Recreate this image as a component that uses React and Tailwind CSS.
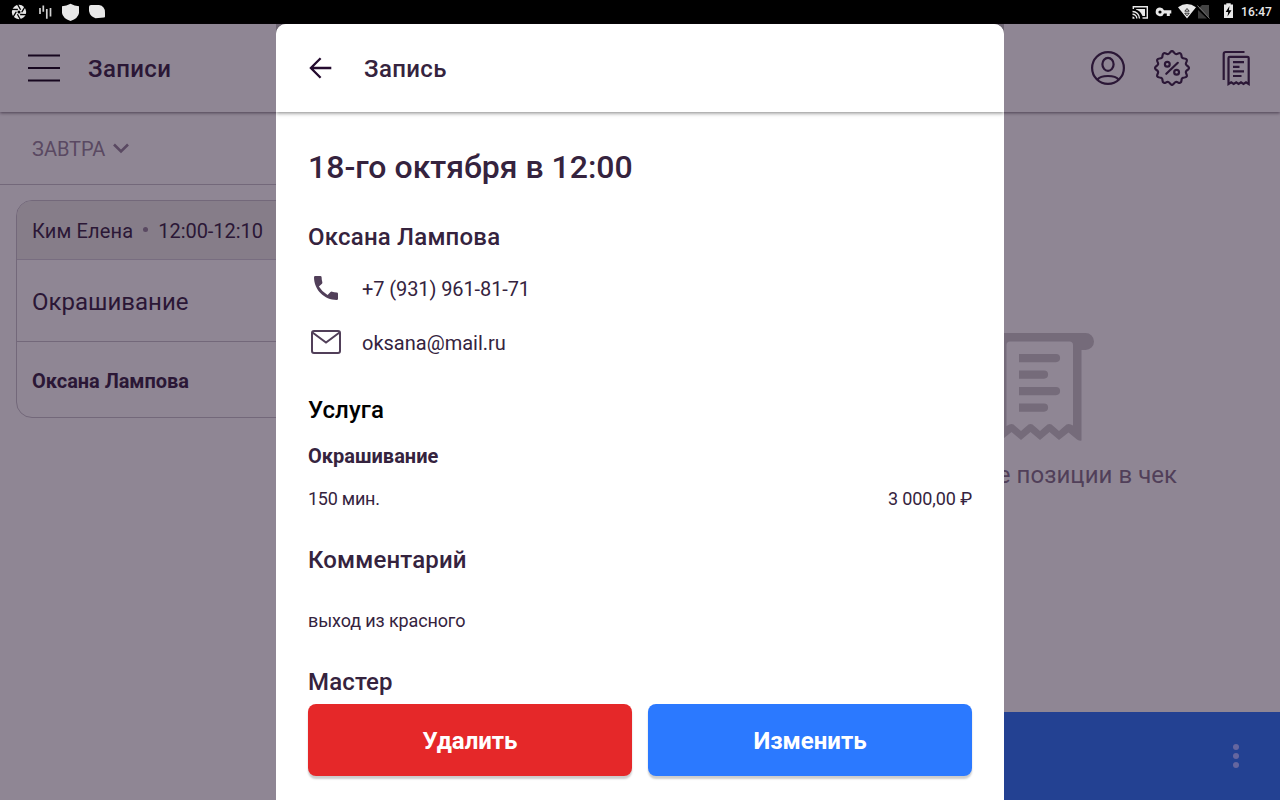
import React from "react";

const service = {
  name: "Окрашивание",
  duration: "150 мин.",
  price: "3 000,00 ₽",
};

function StatusBar() {
  return (
    <div className="h-6 shrink-0 bg-black flex items-center justify-between text-[#e8e8e8]">
      <svg width="110" height="24" viewBox="0 0 110 24" fill="currentColor">
        <circle cx="19" cy="12" r="7.2" />
        <g stroke="#000" strokeWidth="1.300" fill="none">
          {[0, 60, 120, 180, 240, 300].map((angle) => (
            <path key={angle} d="M17.500 4.300 20.600 9.800" transform={`rotate(${angle} 19 12)`} />
          ))}
        </g>
        <circle cx="19" cy="12" r="1.500" fill="#000" />
        <g stroke="#d0d0d0" strokeWidth="1.700" fill="none">
          <path d="M40 8v6M43.300 5.500v6.300M46.800 9v9.800M50.500 8v8.500" />
        </g>
        <path d="M62 6.200Q66.500 6 70.500 3.800 74.500 6 79 6.200V13Q78.300 18.300 70.500 21 62.700 18.300 62 13Z" />
        <path d="M91 5H99Q105 6 105 12.500V16.500Q105 17.500 104 17.600L95.500 18.200Q90 16.500 89 11V7Q89 5 91 5Z" />
      </svg>
      <div className="flex items-center pr-2">
        <svg width="111" height="24" viewBox="1130 0 111 24" fill="currentColor">
          <g fill="none" stroke="currentColor" strokeWidth="1.400">
            <path d="M1133.300 9V6.800H1147.300V18H1142.500" />
            <path d="M1132.500 11.500A7 7 0 0 1 1139.500 18.500M1132.500 14.300A4.300 4.300 0 0 1 1136.800 18.600" />
          </g>
          <path d="M1136 9H1145V16H1142.500Q1140.500 11 1136 9.600Z" />
          <path d="M1132.500 16.500A2.200 2.200 0 0 1 1134.700 18.700H1132.500Z" />
          <path
            fillRule="evenodd"
            d="M1160 7.600A4.300 4.300 0 1 0 1164 13.400H1166.800V16H1169.800V13.400H1171.300V10.300H1164A4.300 4.300 0 0 0 1160 7.600ZM1160 10.400A1.600 1.600 0 1 1 1160 13.600 1.600 1.600 0 0 1 1160 10.400Z"
          />
          <path d="M1178 7.300Q1187 .9 1196 7.300L1187 18.600Z" />
          <g fill="none" stroke="#222" strokeWidth=".9">
            <path d="M1184.800 11.200 1187 8.500 1189.200 11.200ZM1184.800 13.200 1187 15.900 1189.200 13.200Z" />
          </g>
          <path d="M1202 5H1209V17.500L1199 8Z" fill="#444" />
          <path d="M1198 10V18.500H1207Z" fill="#3a3a3a" />
          <path d="M1197.500 5.500 1209.500 18.500" stroke="#777" strokeWidth="1" />
          <path d="M1224 4.500H1226.300V3.200H1230.700V4.500H1233V18H1224Z" />
          <path d="M1229.500 6 1225.700 12H1228.200L1227.500 16.500 1231.500 10.200H1228.900Z" fill="#000" />
        </svg>
        <span className="text-[12px] leading-6 font-medium tracking-[0.1px]">16:47</span>
      </div>
    </div>
  );
}

function ProfileIcon() {
  return (
    <svg width="36" height="36" viewBox="0 0 36 36" fill="none" stroke="currentColor" strokeWidth="2.200">
      <circle cx="18" cy="18" r="15.900" />
      <ellipse cx="18" cy="14.300" rx="5.600" ry="6.500" />
      <path d="M7.500 29.500Q10 26 18 26T28.500 29.500" />
    </svg>
  );
}

// twelve-lobed badge with a percent sign
function DiscountIcon() {
  const count = 12;
  const point = (r, i) => {
    const a = (i * Math.PI) / count - Math.PI / 2;
    return `${(18 + r * Math.cos(a)).toFixed(2)} ${(18 + r * Math.sin(a)).toFixed(2)}`;
  };
  let d = `M${point(15.6, -0.5)}`;
  for (let i = 0; i < count * 2; i++) {
    d += `Q${point(i % 2 ? 13.4 : 18.4, i)} ${point(15.6, i + 0.5)}`;
  }
  return (
    <svg width="36" height="36" viewBox="0 0 36 36" fill="none" stroke="currentColor" strokeWidth="2.200">
      <path d={d + "Z"} />
      <circle cx="13.300" cy="14.300" r="2.400" />
      <circle cx="22.600" cy="22.200" r="2.400" />
      <path d="M23.800 12.800 12.300 23.800" strokeLinecap="round" />
    </svg>
  );
}

function ReceiptsIcon() {
  return (
    <svg width="36" height="36" viewBox="0 0 36 36" fill="none" stroke="currentColor" strokeWidth="2.200">
      <path d="M5.700 30V4Q5.700 2 7.700 2H26.500" />
      <path d="M10.500 34V8Q10.500 6.800 11.700 6.800H29.500Q30.700 6.800 30.700 8V34L28 32.300 25.500 34 23 32.300 20.600 34 18.200 32.300 15.700 34 13.200 32.300Z" />
      <path d="M15 12.200H26M15 16.800H21.500M15 21.400H26M15 26H23.500" />
    </svg>
  );
}

function EmptyReceiptIcon() {
  return (
    <svg width="108" height="108" viewBox="0 0 108 108" fill="currentColor">
      <path
        fillRule="evenodd"
        d="M8.500 0H99.500A8.500 8.500 0 0 1 99.500 17H95.500V107.500Q92.500 108 91 106.500L82.500 99.500 73 107 63.500 99 54 107 44.500 99 35 107 25.500 99 15 107.500 12.500 107V17H8.500A8.500 8.500 0 0 1 8.500 0ZM24 8.500Q20.500 8.500 20.500 12V93L23.500 91.500Q25.500 90.500 27.500 91.500L35 98 42.500 91.500Q44.500 90.500 46.500 91.500L54 98 61.500 91.500Q63.500 90.500 65.500 91.500L73 98 80.500 91.500Q83.500 90 87 92.500V12Q87 8.500 83.500 8.500Z"
      />
      <path d="M33 21H70A4.100 4.100 0 0 1 70 29.200H33ZM33 37.500H58A4.100 4.100 0 0 1 58 45.700H33ZM33 54H70A4.100 4.100 0 0 1 70 62.200H33ZM33 70.500H58A4.100 4.100 0 0 1 58 78.700H33Z" />
    </svg>
  );
}

function AppHeader() {
  return (
    <header className="relative h-[88px] shrink-0 flex items-center justify-between pl-7 pr-[26px] shadow-[0_1px_3px_rgba(40,25,45,0.65)] bg-[#8f8694] text-[#2b1736]">
      <div className="flex items-center gap-7">
        <svg width="32" height="28" viewBox="0 0 32 28" stroke="#17071f" strokeWidth="2">
          <path d="M0 1.500H32M0 14H32M0 26.500H32" />
        </svg>
        <h1 className="pt-0.5 text-2xl font-medium tracking-[0.35px]">Записи</h1>
      </div>
      <div className="flex gap-7">
        <ProfileIcon />
        <DiscountIcon />
        <ReceiptsIcon />
      </div>
    </header>
  );
}

function Schedule() {
  return (
    <section className="w-[800px]">
      <div className="h-[73px] flex items-center gap-2 px-8 border-b border-[#73687a] text-[#5a4962]">
        <span className="pt-0.5 text-xl">ЗАВТРА</span>
        <svg width="16" height="11" viewBox="0 0 16 11" fill="none" stroke="currentColor" strokeWidth="2.600">
          <path d="M1 1.500 8 8.500 15 1.500" />
        </svg>
      </div>
      <div className="mx-4 mt-[15px] border border-[#73687a] rounded-2xl overflow-hidden text-[#2b1736]">
        <div className="h-[59px] px-[15px] pt-0.5 flex items-center bg-[#867d89] border-b border-[#786d80] text-xl">
          <span className="tracking-[0.15px]">Ким Елена</span>
          <span className="mx-[10px] mb-1 size-[5px] rounded-full bg-[#5a4962]" />
          <span className="tracking-[-0.05px]">12:00-12:10</span>
        </div>
        <div className="h-[82px] px-[15px] pt-0.5 flex items-center border-b border-[#73687a] text-2xl">Окрашивание</div>
        <div className="h-[75px] px-[15px] pt-0.5 flex items-center text-xl font-bold tracking-[-0.05px]">Оксана Лампова</div>
      </div>
    </section>
  );
}

function Receipt() {
  return (
    <section className="w-[480px] flex flex-col">
      <div className="flex-1 flex flex-col items-center pt-[221px] text-[#756b7a]">
        <EmptyReceiptIcon />
        <p className="mt-[18px] text-2xl text-[#513f59] tracking-[0.05px]">Добавьте позиции в чек</p>
      </div>
      <div className="h-[88px] flex items-center justify-end pr-[41px] bg-[#234192]">
        <div className="flex flex-col gap-[3px]">
          <i className="size-1.5 rounded-full bg-[#65669f]" />
          <i className="size-1.5 rounded-full bg-[#65669f]" />
          <i className="size-1.5 rounded-full bg-[#65669f]" />
        </div>
      </div>
    </section>
  );
}

function AppointmentModal() {
  return (
    <div className="absolute top-6 bottom-0 left-[276px] w-[728px] bg-[#6f6774]">
      <div className="h-full flex flex-col bg-white rounded-t-[10px] overflow-hidden text-[#35233e]">
        <header className="relative h-[88px] shrink-0 flex items-center pl-8 bg-white shadow-[0_1px_4px_rgba(0,0,0,0.5)]">
          <svg width="24" height="24" viewBox="0 0 24 24" fill="none" stroke="#240b2f" strokeWidth="2.300">
            <path d="M23.300 12H3M12.600 2.300 2.900 12 12.600 21.700" />
          </svg>
          <h2 className="ml-8 pt-0.5 text-2xl font-medium tracking-[0.35px]">Запись</h2>
        </header>

        <div className="flex-1 min-h-0 overflow-hidden px-8 pt-[35px]">
          <h3 className="text-[32px] leading-10 font-medium">18-го октября в 12:00</h3>
          <h4 className="mt-[34px] text-2xl leading-8 font-medium tracking-[0.2px]">Оксана Лампова</h4>
          <div className="mt-2 text-xl">
            <div className="h-[54px] flex items-center gap-[18px]">
              <svg className="shrink-0" width="36" height="36" viewBox="0 0 36 36" fill="#513f59">
                <path d="M7.300 6H12.200Q13.600 6 13.600 7.300C13.600 9 13.900 10.500 14.300 12Q14.600 13 14 13.700L10.900 16.400Q14.100 21.800 19.600 25.100L22.500 22Q23.200 21.300 24.100 21.700 26.200 22.400 28.700 22.400 30 22.400 30 23.700V28.700Q30 30 28.700 30C16.300 30 6 19.700 6 7.300Q6 6 7.300 6Z" />
              </svg>
              <span className="pt-0.5 tracking-[-0.1px]">+7 (931) 961-81-71</span>
            </div>
            <div className="h-[54px] flex items-center gap-[18px]">
              <svg className="shrink-0" width="36" height="36" viewBox="0 0 36 36" fill="none" stroke="#513f59" strokeWidth="2">
                <rect x="4" y="7" width="28" height="22" rx="2" />
                <path d="M4.500 8.500 18 18.500 31.500 8.500" />
              </svg>
              <span className="pt-0.5">oksana@mail.ru</span>
            </div>
          </div>

          <h4 className="mt-[25px] text-2xl leading-8 font-medium text-black tracking-[0.1px]">Услуга</h4>
          <p className="mt-4 text-xl leading-7 font-bold">{service.name}</p>
          <div className="mt-[17px] flex justify-between text-lg leading-6">
            <span className="tracking-[-0.25px]">{service.duration}</span>
            <span className="tracking-[-0.1px]">{service.price}</span>
          </div>

          <h4 className="mt-[33px] text-2xl leading-8 font-medium tracking-[0.15px]">Комментарий</h4>
          <p className="mt-[33px] text-lg leading-6 tracking-[-0.12px]">выход из красного</p>
          <h4 className="mt-[33px] text-2xl leading-8 font-medium tracking-[0.15px]">Мастер</h4>
        </div>

        <footer className="grid grid-cols-2 gap-4 px-8 pb-6 text-white text-2xl font-bold">
          <button className="h-[72px] pt-0.5 rounded-lg bg-[#e52829] shadow-[0_3px_2px_rgba(0,0,0,0.2)]">Удалить</button>
          <button className="h-[72px] pt-0.5 rounded-lg bg-[#2b79ff] shadow-[0_3px_2px_rgba(0,0,0,0.2)]">Изменить</button>
        </footer>
      </div>
    </div>
  );
}

export default function App() {
  return (
    <div className="relative w-[1280px] h-[800px] overflow-hidden flex flex-col bg-[#8f8694] font-['Roboto',sans-serif]">
      <StatusBar />
      <AppHeader />
      <main className="flex-1 flex">
        <Schedule />
        <Receipt />
      </main>
      <AppointmentModal />
    </div>
  );
}
